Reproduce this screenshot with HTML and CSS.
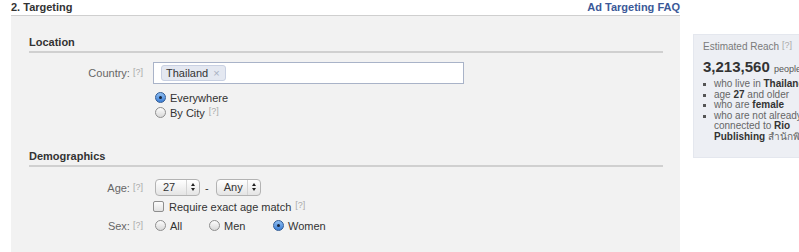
FILE: index.html
```html
<!DOCTYPE html>
<html lang="en">

<head>
    <meta charset="UTF-8">
    <title>Targeting</title>
    <link rel="stylesheet" href="styles.css">
</head>

<body>
    <div class="page">
        <div class="main">
            <div class="top">
                <span class="step">2. Targeting</span>
                <a class="faq" href="#">Ad Targeting FAQ</a>
            </div>
            <div class="panel">
                <h3 class="section">Location</h3>
                <div class="row country">
                    <div class="label">Country: <span class="help">[?]</span></div>
                    <div class="field">
                        <div class="tokens">
                            <span class="token">Thailand <span class="x">&times;</span></span>
                        </div>
                    </div>
                </div>
                <div class="row first-opt">
                    <div class="label"></div>
                    <div class="field opt"><span class="radio on"></span>Everywhere</div>
                </div>
                <div class="row">
                    <div class="label"></div>
                    <div class="field opt"><span class="radio"></span>By City <span class="help">[?]</span></div>
                </div>

                <h3 class="section demo">Demographics</h3>
                <div class="row age">
                    <div class="label">Age: <span class="help">[?]</span></div>
                    <div class="field">
                        <span class="select"><span class="val">27</span><span class="arrows"></span></span>
                        <span class="dash">-</span>
                        <span class="select"><span class="val">Any</span><span class="arrows"></span></span>
                    </div>
                </div>
                <div class="row">
                    <div class="label"></div>
                    <div class="field opt"><span class="check"></span>Require exact age match <span class="help">[?]</span></div>
                </div>
                <div class="row sex">
                    <div class="label">Sex: <span class="help">[?]</span></div>
                    <div class="field sexes">
                        <span class="opt w-all"><span class="radio"></span>All</span>
                        <span class="opt w-men"><span class="radio"></span>Men</span>
                        <span class="opt"><span class="radio on"></span>Women</span>
                    </div>
                </div>
            </div>
        </div>

        <div class="reach">
            <div class="reach-title">Estimated Reach <span class="help">[?]</span></div>
            <div class="reach-num">3,213,560 <span class="people">people</span></div>
            <ul class="reach-list">
                <li>who live in <b>Thailand</b></li>
                <li>age <b>27</b> and older</li>
                <li>who are <b>female</b></li>
                <li>who are not already connected to <b>Rio</b> <span class="nw"><b>Publishing</b> สำนักพิมพ์ริโอ</span></li>
            </ul>
        </div>
    </div>
</body>

</html>
```

FILE: styles.css
```css
body {
    margin: 0;
    background-color: white;
    font-family: "Liberation Sans", Arial, sans-serif;
    font-size: 11px;
    color: #333;
    overflow: hidden;
}
.page {
    display: flex;
    align-items: flex-start;
}
.main {
    width: 669px;
    margin-left: 11px;
    flex-shrink: 0;
}

.top {
    display: flex;
    justify-content: space-between;
    height: 15px;
    line-height: 14px;
    font-weight: bold;
}
.faq {
    color: #3b5998;
    text-decoration: none;
}

.panel {
    background-color: #f2f2f2;
    border-top: 1px solid #cfcfcf;
    padding: 19px 17px 40px 18px;
}
.section {
    margin: 0;
    font-size: 11px;
    line-height: 14px;
    padding-bottom: 2px;
    border-bottom: 2px solid #d0d0d0;
}
.section.demo {
    margin-top: 29px;
}

.row {
    display: flex;
    align-items: center;
    min-height: 15px;
}
.label {
    width: 114px;
    text-align: right;
    color: #666;
    flex-shrink: 0;
}
.field {
    margin-left: 10px;
    display: flex;
    align-items: center;
}
.help {
    font-size: 9px;
    color: #aaa;
    position: relative;
    top: -2px;
}
.opt .help {
    margin-left: 4px;
}

.country {
    margin-top: 9px;
}
.tokens {
    width: 302px;
    height: 20px;
    background-color: white;
    border: 1px solid #a9b3c8;
    display: flex;
    align-items: center;
    padding-left: 7px;
}
.token {
    background-color: #e4e8f1;
    border: 1px solid #c8d0e2;
    border-radius: 3px;
    padding: 0 5px 0 4px;
    line-height: 14px;
    color: #333;
}
.token .x {
    color: #a8b0c2;
    margin-left: 2px;
}
.first-opt {
    margin-top: 6px;
}
.opt {
    display: flex;
    align-items: center;
    color: #333;
}

.radio {
    display: inline-block;
    width: 9px;
    height: 9px;
    border-radius: 50%;
    border: 1px solid #8e8e8e;
    background: linear-gradient(#fcfcfc, #d8d8d8);
    margin: 0 4px 0 2px;
    position: relative;
}
.radio.on {
    border-color: #2f5a94;
    background: linear-gradient(#8fbef2, #3c7fd6);
}
.radio.on::after {
    content: "";
    position: absolute;
    left: 3px;
    top: 3px;
    width: 3px;
    height: 3px;
    border-radius: 50%;
    background-color: #17243a;
}
.check {
    display: inline-block;
    width: 9px;
    height: 9px;
    border: 1px solid #8e8e8e;
    border-radius: 2px;
    background: linear-gradient(#fcfcfc, #e2e2e2);
    margin: 0 5px 0 0;
}

.age {
    margin-top: 12px;
    margin-bottom: 3px;
}
.select {
    display: inline-flex;
    align-items: stretch;
    width: 43px;
    height: 15px;
    border: 1px solid #b3b3b3;
    border-radius: 4px;
    background: linear-gradient(#ffffff, #e4e4e4);
    margin-left: 2px;
}
.select .val {
    flex: 1;
    padding-left: 7px;
    line-height: 15px;
}
.select .arrows {
    width: 12px;
    border-left: 1px solid #d4d4d4;
    position: relative;
}
.select .arrows::before,
.select .arrows::after {
    content: "";
    position: absolute;
    left: 4px;
    border-left: 2px solid transparent;
    border-right: 2px solid transparent;
}
.select .arrows::before {
    top: 3px;
    border-bottom: 3px solid #222;
}
.select .arrows::after {
    top: 8px;
    border-top: 3px solid #222;
}
.dash {
    margin: 0 5px;
}
.sex {
    margin-top: 4px;
}
.sexes .opt .radio {
    margin-left: 0;
}
.sexes {
    margin-left: 12px;
}
.w-all {
    width: 54px;
}
.w-men {
    width: 64px;
}

.reach {
    margin: 34px 0 0 13px;
    width: 150px;
    flex-shrink: 0;
    background-color: #edeff4;
    border: 1px solid #e4e7ee;
    padding: 6px 0 15px 9px;
    color: #666;
}
.reach-title {
    font-size: 10px;
    line-height: 12px;
    color: #7a7a7a;
}
.reach-num {
    font-size: 15px;
    font-weight: bold;
    line-height: 18px;
    margin-top: 5px;
    color: #333;
}
.people {
    font-size: 9px;
    font-weight: normal;
    color: #555;
}
.reach-list {
    list-style: none;
    margin: 1px 0 0;
    padding: 0;
    width: 118px;
    font-size: 10px;
    line-height: 10.5px;
}
.reach-list li {
    padding-left: 11px;
    position: relative;
}
.reach-list li::before {
    content: "";
    position: absolute;
    left: 0;
    top: 4px;
    width: 3px;
    height: 3px;
    background-color: #555;
}
.reach-list b {
    color: #333;
}
.nw {
    white-space: nowrap;
}
```
